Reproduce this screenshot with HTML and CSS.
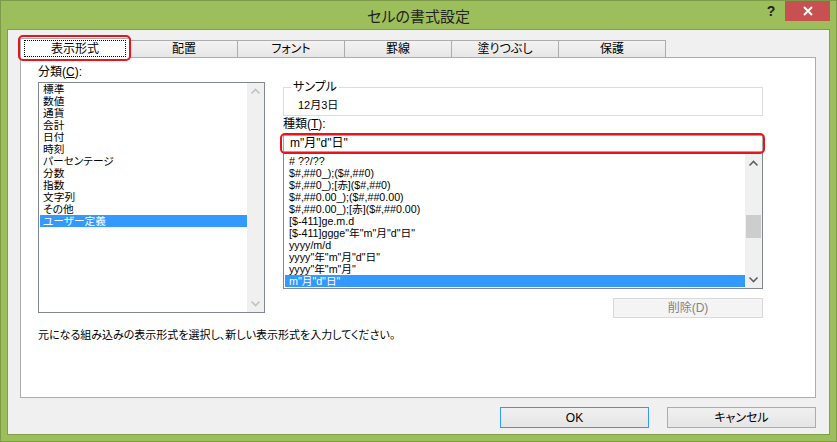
FILE: index.html
```html
<!DOCTYPE html>
<html lang="ja">
<head>
<meta charset="utf-8">
<title>セルの書式設定</title>
<link rel="stylesheet" href="styles.css">
</head>
<body>
<div class="window">
  <div class="titlebar">
    <div class="title">セルの書式設定</div>
    <div class="controls">
      <div class="help">?</div>
      <div class="close">
        <svg width="10" height="10" viewBox="0 0 10 10"><path d="M1 1 L9 9 M9 1 L1 9" stroke="#fff" stroke-width="2" fill="none"/></svg>
      </div>
    </div>
  </div>
  <div class="client">
    <div class="tabs">
      <div class="tab active">
        <span class="focus">表示形式</span>
        <span class="mark mark-tab"></span>
      </div>
      <div class="tab">配置</div>
      <div class="tab">フォント</div>
      <div class="tab">罫線</div>
      <div class="tab">塗りつぶし</div>
      <div class="tab">保護</div>
    </div>
    <div class="panel">
      <div class="col">
        <div class="label">分類(<u>C</u>):</div>
        <div class="listbox left-list">
          <div class="items">
            <div class="item">標準</div>
            <div class="item">数値</div>
            <div class="item">通貨</div>
            <div class="item">会計</div>
            <div class="item">日付</div>
            <div class="item">時刻</div>
            <div class="item">パーセンテージ</div>
            <div class="item">分数</div>
            <div class="item">指数</div>
            <div class="item">文字列</div>
            <div class="item">その他</div>
            <div class="item sel">ユーザー定義</div>
          </div>
          <div class="sb disabled">
            <div class="sb-btn"><svg width="17" height="17" viewBox="0 0 17 17"><polyline points="4.5,10.5 8.5,6.5 12.5,10.5" fill="none" stroke="#c2c2c2" stroke-width="1.6"/></svg></div>
            <div class="sb-track"></div>
            <div class="sb-btn"><svg width="17" height="17" viewBox="0 0 17 17"><polyline points="4.5,6.5 8.5,10.5 12.5,6.5" fill="none" stroke="#c2c2c2" stroke-width="1.6"/></svg></div>
          </div>
        </div>
      </div>
      <div class="col">
        <fieldset class="group">
          <legend>サンプル</legend>
          <div class="sample">12月3日</div>
        </fieldset>
        <div class="label type-label">種類(<u>T</u>):</div>
        <div class="inputwrap">
          <div class="input">m"月"d"日"</div>
          <span class="mark mark-input"></span>
        </div>
        <div class="listbox right-list">
          <div class="items">
            <div class="item">#&nbsp;??/??</div>
            <div class="item">$#,##0_);($#,##0)</div>
            <div class="item">$#,##0_);[赤]($#,##0)</div>
            <div class="item">$#,##0.00_);($#,##0.00)</div>
            <div class="item">$#,##0.00_);[赤]($#,##0.00)</div>
            <div class="item">[$-411]ge.m.d</div>
            <div class="item">[$-411]ggge"年"m"月"d"日"</div>
            <div class="item">yyyy/m/d</div>
            <div class="item">yyyy"年"m"月"d"日"</div>
            <div class="item">yyyy"年"m"月"</div>
            <div class="item sel">m"月"d"日"</div>
          </div>
          <div class="sb">
            <div class="sb-btn"><svg width="17" height="17" viewBox="0 0 17 17"><polyline points="4.5,12.5 8.5,8.5 12.5,12.5" fill="none" stroke="#606060" stroke-width="1.6"/></svg></div>
            <div class="sb-track"><div class="thumb"></div></div>
            <div class="sb-btn"><svg width="17" height="17" viewBox="0 0 17 17"><polyline points="4.5,6.5 8.5,10.5 12.5,6.5" fill="none" stroke="#606060" stroke-width="1.6"/></svg></div>
          </div>
        </div>
        <div class="btn-del">削除(D)</div>
      </div>
      <div class="desc">元になる組み込みの表示形式を選択し、新しい表示形式を入力してください。</div>
    </div>
    <div class="buttons">
      <div class="btn default">OK</div>
      <div class="btn">キャンセル</div>
    </div>
  </div>
</div>
</body>
</html>
```

FILE: styles.css
```css
* { box-sizing: border-box; }
html, body { margin: 0; padding: 0; }
body {
  width: 837px;
  height: 442px;
  overflow: hidden;
  font-family: "Liberation Sans", "Noto Sans CJK JP", sans-serif;
  font-size: 12px;
  line-height: 12px;
  color: #000;
  font-feature-settings: "palt";
}
.window {
  width: 837px;
  height: 442px;
  background: #9dbf5b;
  border: 1px solid #7c9a47;
  display: flex;
  flex-direction: column;
}
.titlebar {
  height: 28px;
  flex: none;
  display: grid;
  grid-template-columns: 1fr auto 1fr;
}
.title {
  grid-column: 2;
  font-family: "Noto Sans CJK JP", sans-serif;
  font-size: 15px;
  line-height: 20px;
  margin-top: 5px;
  color: #222;
}
.controls {
  grid-column: 3;
  justify-self: end;
  display: flex;
  align-items: flex-start;
  margin-right: 6px;
}
.help {
  width: 28px;
  height: 20px;
  display: flex;
  align-items: center;
  justify-content: center;
  font: bold 14px "Liberation Sans", sans-serif;
  color: #222;
}
.close {
  width: 45px;
  height: 20px;
  background: #c75050;
  display: flex;
  align-items: center;
  justify-content: center;
}
.client {
  flex: 1;
  margin: 0 6px 6px;
  border: 1px solid #7f9e49;
  background: #f0f0f0;
  padding: 8px 13px 0 12px;
  display: flex;
  flex-direction: column;
}
.tabs {
  flex: none;
  height: 20px;
  display: flex;
  align-items: flex-end;
}
.tab {
  width: 108px;
  height: 17px;
  margin-left: -1px;
  margin-bottom: 1px;
  border: 1px solid #acacac;
  border-bottom: none;
  background: linear-gradient(#f3f3f3, #e6e6e6);
  display: flex;
  align-items: center;
  justify-content: center;
}
.tab.active {
  width: 111px;
  height: 20px;
  margin: 0;
  background: #fff;
  position: relative;
  z-index: 1;
  padding: 1px 4px 1px 3px;
  align-items: stretch;
}
.focus {
  flex: 1;
  border: 1px dotted #000;
  display: flex;
  align-items: center;
  justify-content: center;
}
.mark {
  position: absolute;
  border: 2px solid #e8141b;
  border-radius: 5px;
  pointer-events: none;
}
.mark-tab {
  left: -3px;
  top: -4px;
  width: 113px;
  height: 26px;
}
.panel {
  flex: none;
  height: 341px;
  margin-top: -1px;
  border: 1px solid #acacac;
  background: #fff;
  padding: 8px 0 0 17px;
  display: grid;
  grid-template-columns: 227px 480px;
  column-gap: 18px;
  align-content: start;
}
.col {
  display: flex;
  flex-direction: column;
}
.label { height: 12px; }
.listbox {
  border: 1px solid #828790;
  background: #fff;
  display: flex;
  overflow: hidden;
}
.left-list {
  margin-top: 4px;
  height: 231px;
}
.items {
  flex: 1;
  padding-left: 1px;
  min-width: 0;
  font-size: 10.7px;
}
.item {
  height: 12px;
  line-height: 12px;
  padding-left: 3px;
  white-space: nowrap;
}
.item.sel {
  background: #3399ff;
  color: #fff;
}
.right-list {
  height: 137px;
}
.right-list .items { padding-top: 2px; }
.right-list .item { padding-left: 4px; }
.sb {
  flex: none;
  width: 17px;
  background: #f0f0f0;
  display: flex;
  flex-direction: column;
}
.sb-btn { height: 17px; }
.sb-btn svg { display: block; }
.sb-track { flex: 1; }
.thumb {
  margin: 45px 1px 0;
  height: 23px;
  background: #cdcdcd;
}
.group {
  margin: 15px 0 0;
  padding: 6px 0 4px 14px;
  border: 1px solid #dcdcdc;
  min-width: 0;
}
.group legend {
  padding: 0 2px;
  margin-left: -7px;
  line-height: 12px;
}
.sample {
  height: 12px;
  font-size: 11px;
}
.type-label { margin-top: 2px; }
.inputwrap {
  position: relative;
  margin-top: 5px;
}
.input {
  height: 17px;
  border: 1px solid #a5a5a5;
  padding-left: 6px;
  line-height: 15px;
  background: #fff;
}
.mark-input {
  left: -3px;
  top: -2px;
  width: 485px;
  height: 21px;
}
.btn-del {
  align-self: flex-end;
  margin-top: 9px;
  width: 150px;
  height: 20px;
  border: 1px solid #d9d9d9;
  background: #f4f4f4;
  color: #838383;
  display: flex;
  align-items: center;
  justify-content: center;
}
.desc {
  grid-column: 1 / -1;
  margin-top: 11px;
  font-size: 11px;
}
.buttons {
  flex: none;
  display: flex;
  justify-content: flex-end;
  gap: 18px;
  margin-top: 9px;
}
.btn {
  width: 149px;
  height: 21px;
  border: 1px solid #acacac;
  background: linear-gradient(#f0f0f0, #e5e5e5);
  display: flex;
  align-items: center;
  justify-content: center;
}
.btn.default { border-color: #3399ff; }
```
